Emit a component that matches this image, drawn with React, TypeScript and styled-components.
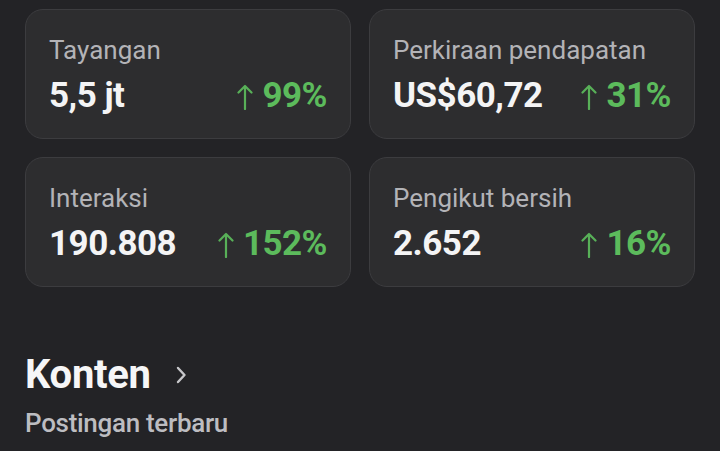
import { createGlobalStyle, styled } from "styled-components";

const GlobalStyle = createGlobalStyle`
  html, body {
    margin: 0;
    padding: 0;
    background: #232326;
  }
  body {
    font-family: Roboto, "Noto Sans", sans-serif;
  }
`;

type Stat = {
  label: string;
  value: string;
  change: string;
};

const STATS: Stat[] = [
  { label: "Tayangan", value: "5,5 jt", change: "99%" },
  { label: "Perkiraan pendapatan", value: "US$60,72", change: "31%" },
  { label: "Interaksi", value: "190.808", change: "152%" },
  { label: "Pengikut bersih", value: "2.652", change: "16%" },
];

const App = () => {
  return (
    <Page>
      <GlobalStyle />
      <StatGrid>
        {STATS.map((stat) => (
          <StatCard key={stat.label}>
            <StatLabel>{stat.label}</StatLabel>
            <StatRow>
              <StatValue>{stat.value}</StatValue>
              <StatChange>
                <UpArrow viewBox="0 0 16 26">
                  <path d="M8 25 V2 M1.5 8.5 L8 2 L14.5 8.5" />
                </UpArrow>
                {stat.change}
              </StatChange>
            </StatRow>
          </StatCard>
        ))}
      </StatGrid>

      <Section>
        <SectionTitle>
          Konten
          <Chevron viewBox="0 0 12 20">
            <path d="M3 3 L9.5 10 L3 17" />
          </Chevron>
        </SectionTitle>
        <SectionSub>Postingan terbaru</SectionSub>
      </Section>
    </Page>
  );
};

export default App;

const Page = styled.main`
  width: 720px;
  height: 451px;
  overflow: hidden;
  box-sizing: border-box;
  padding: 9px 25px 0;
  background: #232326;
`;

const StatGrid = styled.section`
  display: grid;
  grid-template-columns: repeat(2, 1fr);
  gap: 18px;
`;

const StatCard = styled.article`
  display: flex;
  flex-direction: column;
  gap: 11px;
  height: 130px;
  box-sizing: border-box;
  padding: 25px 23px 0;

  background: #2d2d2f;
  border: 1px solid #3c3c3f;
  border-radius: 18px;
`;

const StatLabel = styled.p`
  margin: 0;
  font-size: 26px;
  line-height: 30px;
  font-weight: 400;
  color: #b3b3b7;
`;

const StatRow = styled.div`
  display: flex;
  align-items: baseline;
  justify-content: space-between;
`;

const StatValue = styled.span`
  font-size: 35px;
  line-height: 40px;
  font-weight: 700;
  color: #f4f4f5;
  letter-spacing: -0.5px;
`;

const StatChange = styled.span`
  display: flex;
  align-items: baseline;
  gap: 9px;
  font-size: 35px;
  line-height: 40px;
  font-weight: 700;
  color: #5cbb5c;
  letter-spacing: -0.5px;
`;

const UpArrow = styled.svg`
  width: 16px;
  height: 26px;
  align-self: center;
  margin-top: 2px;
  fill: none;
  stroke: #58b058;
  stroke-width: 2.2;
  stroke-linecap: round;
  stroke-linejoin: round;
`;

const Section = styled.section`
  display: flex;
  flex-direction: column;
  margin-top: 65px;
  gap: 10px;
`;

const SectionTitle = styled.h2`
  display: flex;
  align-items: center;
  gap: 24px;
  margin: 0;
  font-size: 40px;
  line-height: 46px;
  font-weight: 700;
  color: #f6f6f7;
  letter-spacing: -0.3px;
`;

const Chevron = styled.svg`
  width: 12px;
  height: 20px;
  fill: none;
  stroke: #c7c7ca;
  stroke-width: 2.4;
  stroke-linecap: round;
  stroke-linejoin: round;
`;

const SectionSub = styled.p`
  margin: 0;
  font-size: 26px;
  line-height: 30px;
  font-weight: 500;
  color: #bdbdc1;
  letter-spacing: -0.3px;
`;
